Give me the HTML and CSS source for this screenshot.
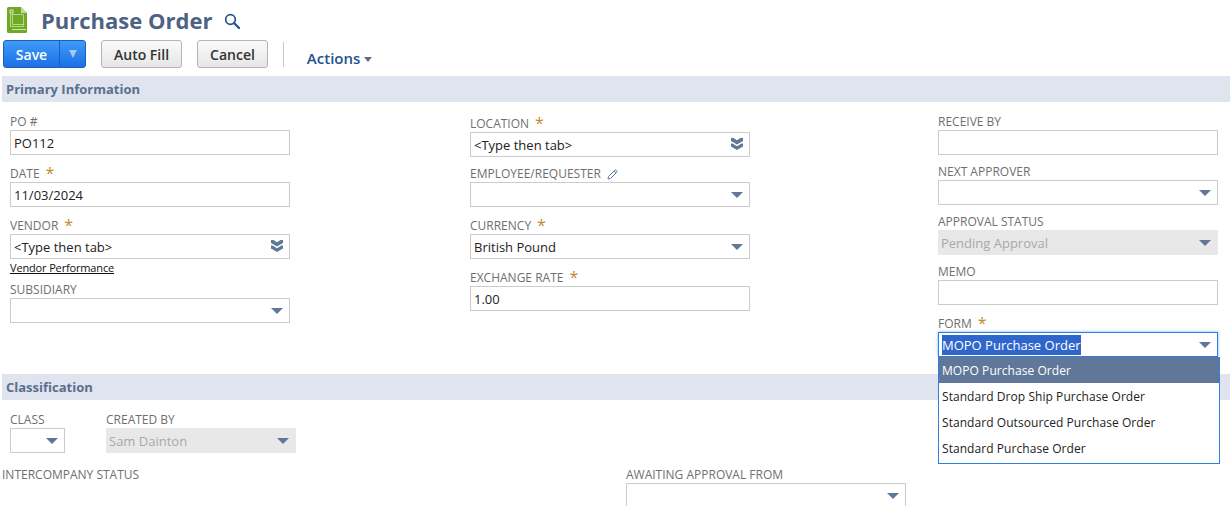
FILE: index.html
```html
<!DOCTYPE html>
<html lang="en">
<head>
<meta charset="utf-8">
<title>Purchase Order</title>
<link rel="stylesheet" href="styles.css">
</head>
<body>
<header class="title-row">
  <svg class="doc-icon" width="20" height="26" viewBox="0 0 20 26">
    <path d="M0 1.500Q0 0 1.500 0H14L20 6V24.500Q20 26 18.500 26H1.500Q0 26 0 24.500Z" fill="#6eaa24"/>
    <path d="M14 0L20 6H14Z" fill="#c3dc9c"/>
    <path d="M3 3h3v3H3z" fill="none" stroke="#dcebc4" stroke-width="1"/>
    <path d="M3.500 7.500H16.500V19.500H3.500ZM5.500 7.500V17.500H16.500" fill="none" stroke="#b7d690" stroke-width="1"/>
    <path d="M5 22.500H19" stroke="#cfe3ad" stroke-width="1"/>
  </svg>
  <h1 class="page-title">Purchase Order</h1>
  <svg class="search-icon" width="16" height="16" viewBox="0 0 16 16">
    <circle cx="6.500" cy="6.500" r="4.800" fill="none" stroke="#23568f" stroke-width="1.700"/>
    <path d="M10 10L15 15" stroke="#23568f" stroke-width="2.400" stroke-linecap="round"/>
  </svg>
</header>

<div class="toolbar">
  <div class="save-group">
    <button class="save-btn" type="button">Save</button>
    <button class="save-arrow" type="button"><span class="save-tri"></span></button>
  </div>
  <button class="btn" type="button">Auto Fill</button>
  <button class="btn" type="button">Cancel</button>
  <span class="tool-sep"></span>
  <span class="actions">Actions<span class="actions-caret"></span></span>
</div>

<section>
  <h2 class="band">Primary Information</h2>
  <div class="primary">
    <div class="col col-1">
      <div class="field">
        <label class="lbl">PO #</label>
        <div class="box">PO112</div>
      </div>
      <div class="field">
        <label class="lbl req">DATE<span class="star">*</span></label>
        <div class="box">11/03/2024</div>
      </div>
      <div class="field">
        <label class="lbl req">VENDOR<span class="star">*</span></label>
        <div class="box">&lt;Type then tab&gt;<svg class="dbl" width="12" height="12" viewBox="0 0 12 12"><path d="M0 0H2.500L6 2.200L9.500 0H12V3L6 6.500L0 3ZM0 5.500H1.500L6 8.200L10.500 5.500H12V8.500L6 12L0 8.500Z" fill="#607799"/></svg></div>
        <a class="perf-link" href="#">Vendor Performance</a>
      </div>
      <div class="field">
        <label class="lbl">SUBSIDIARY</label>
        <div class="box"><span class="tri"></span></div>
      </div>
    </div>

    <div class="col col-2">
      <div class="field">
        <label class="lbl req">LOCATION<span class="star">*</span></label>
        <div class="box">&lt;Type then tab&gt;<svg class="dbl" width="12" height="12" viewBox="0 0 12 12"><path d="M0 0H2.500L6 2.200L9.500 0H12V3L6 6.500L0 3ZM0 5.500H1.500L6 8.200L10.500 5.500H12V8.500L6 12L0 8.500Z" fill="#607799"/></svg></div>
      </div>
      <div class="field">
        <label class="lbl">EMPLOYEE/REQUESTER<svg class="pencil" width="11" height="11" viewBox="0 0 11 11"><path d="M1 10L1.500 7.500L7.800 1.200Q8.500 0.600 9.300 1.200L9.800 1.700Q10.400 2.500 9.800 3.200L3.500 9.500Z M7 2L9 4" fill="none" stroke="#5f7da6" stroke-width="1"/></svg></label>
        <div class="box"><span class="tri"></span></div>
      </div>
      <div class="field">
        <label class="lbl req">CURRENCY<span class="star">*</span></label>
        <div class="box">British Pound<span class="tri"></span></div>
      </div>
      <div class="field">
        <label class="lbl req">EXCHANGE RATE<span class="star">*</span></label>
        <div class="box">1.00</div>
      </div>
    </div>

    <div class="col col-3">
      <div class="field">
        <label class="lbl">RECEIVE BY</label>
        <div class="box"></div>
      </div>
      <div class="field">
        <label class="lbl">NEXT APPROVER</label>
        <div class="box"><span class="tri"></span></div>
      </div>
      <div class="field">
        <label class="lbl">APPROVAL STATUS</label>
        <div class="box disabled">Pending Approval<span class="tri"></span></div>
      </div>
      <div class="field">
        <label class="lbl">MEMO</label>
        <div class="box"></div>
      </div>
      <div class="field form-field">
        <label class="lbl req">FORM<span class="star">*</span></label>
        <div class="box focus"><span class="selected-text">MOPO Purchase Order</span><span class="tri"></span></div>
        <ul class="menu">
          <li class="menu-item active">MOPO Purchase Order</li>
          <li class="menu-item">Standard Drop Ship Purchase Order</li>
          <li class="menu-item">Standard Outsourced Purchase Order</li>
          <li class="menu-item">Standard Purchase Order</li>
        </ul>
      </div>
    </div>
  </div>
</section>

<section>
  <h2 class="band">Classification</h2>
  <div class="class-row">
    <div class="field class-field">
      <label class="lbl">CLASS</label>
      <div class="box"><span class="tri"></span></div>
    </div>
    <div class="field created-field">
      <label class="lbl">CREATED BY</label>
      <div class="box disabled">Sam Dainton<span class="tri"></span></div>
    </div>
  </div>
  <div class="status-row">
    <div class="field status-field">
      <label class="lbl">INTERCOMPANY STATUS</label>
    </div>
    <div class="field awaiting-field">
      <label class="lbl">AWAITING APPROVAL FROM</label>
      <div class="box"><span class="tri"></span></div>
    </div>
  </div>
</section>
</body>
</html>
```

FILE: styles.css
```css
* { box-sizing: border-box; }
html, body { margin: 0; padding: 0; }
body {
  height: 506px;
  overflow: hidden;
  background: #fff;
  font-family: "Open Sans", sans-serif;
  font-size: 13px;
  color: #222;
}
.title-row {
  display: flex;
  align-items: flex-start;
  height: 40px;
  padding: 7px 0 0 7px;
}
.doc-icon { flex: none; }
.page-title {
  margin: 0 0 0 14px;
  font-size: 22px;
  line-height: 26px;
  font-weight: 700;
  color: #4d6384;
}
.search-icon { margin: 6px 0 0 12px; flex: none; }

.toolbar {
  display: flex;
  align-items: flex-start;
  height: 36px;
  padding-left: 3px;
}
.save-group {
  display: flex;
  width: 83px;
  height: 28px;
  border: 1px solid #1a5fb4;
  border-radius: 3px;
  background: linear-gradient(#3f9bf8, #1c70e6);
  overflow: hidden;
}
.save-btn, .save-arrow, .btn {
  font-family: inherit;
  padding: 0;
  cursor: pointer;
}
.save-btn {
  width: 55px;
  border: 0;
  background: none;
  color: #fff;
  font-size: 14px;
  font-weight: 600;
}
.save-arrow {
  flex: 1;
  display: flex;
  align-items: center;
  justify-content: center;
  border: 0;
  border-left: 1px solid #1a5fb4;
  background: none;
}
.save-tri {
  border-left: 4px solid transparent;
  border-right: 4px solid transparent;
  border-top: 8px solid #a9c8ee;
}
.btn {
  height: 28px;
  margin-left: 15px;
  padding: 0 12px;
  border: 1px solid #b4b4b4;
  border-radius: 3px;
  background: linear-gradient(#fafafa, #e6e6e6);
  color: #333;
  font-size: 14px;
  font-weight: 600;
}
.tool-sep {
  width: 1px;
  height: 25px;
  margin: 2px 23px 0 15px;
  background: #c9c9c9;
}
.actions {
  display: flex;
  align-items: center;
  height: 36px;
  color: #24528f;
  font-size: 15px;
  font-weight: 600;
}
.actions-caret {
  margin: 2px 0 0 4px;
  border-left: 4px solid transparent;
  border-right: 4px solid transparent;
  border-top: 5px solid #5a6f8f;
}

.band {
  height: 26px;
  margin: 0 0 0 2px;
  padding: 0 0 0 4px;
  background: #dfe4ee;
  color: #5a6f8f;
  font-size: 13px;
  line-height: 26px;
  font-weight: 700;
}
.primary {
  display: flex;
  padding: 3px 0 17px 10px;
}
.col { width: 280px; flex: none; }
.col-2 { margin-left: 180px; }
.col-3 { margin-left: 188px; }

.field { position: relative; }
.lbl {
  display: flex;
  align-items: flex-end;
  height: 25px;
  color: #6f6f6f;
  font-size: 12px;
  line-height: 16px;
}
.lbl.req { height: 27px; }
.star {
  position: relative;
  top: -1px;
  margin-left: 6px;
  color: #c68a2e;
  font-size: 16px;
  line-height: 16px;
}
.pencil { margin: 0 0 2px 6px; }
.box {
  position: relative;
  display: flex;
  align-items: center;
  height: 25px;
  padding: 0 3px;
  border: 1px solid #ccc;
  background: #fff;
  color: #222;
  font-size: 13px;
  white-space: nowrap;
}
.box.disabled {
  padding-left: 2px;
  border-color: #e8e8e8;
  background: #e8e8e8;
  color: #a8a8a8;
}
.box.focus {
  border: 1px solid #2f7fe0;
  box-shadow: 0 0 3px #7fb4f0;
}
.selected-text {
  background: #2f66cc;
  color: #fff;
  line-height: 20px;
}
.tri {
  position: absolute;
  right: 6px;
  top: 9px;
  border-left: 6px solid transparent;
  border-right: 6px solid transparent;
  border-top: 6px solid #607799;
}
.dbl { position: absolute; right: 6px; top: 5px; }
.perf-link {
  display: block;
  height: 14px;
  color: #111;
  font-size: 11px;
  line-height: 18px;
  letter-spacing: -0.15px;
  text-decoration: underline;
}
.menu {
  position: absolute;
  left: 0;
  top: 52px;
  z-index: 2;
  width: 282px;
  margin: 0;
  padding: 0 0 2px;
  list-style: none;
  border: 1px solid #2f7fe0;
  border-top: 0;
  background: #fff;
}
.menu-item {
  height: 26px;
  padding-left: 3px;
  color: #222;
  font-size: 12px;
  line-height: 27px;
  letter-spacing: 0.06px;
  white-space: nowrap;
}
.menu-item.active { background: #607799; color: #fff; }

.class-row {
  display: flex;
  padding: 3px 0 0 10px;
}
.class-field { width: 55px; }
.created-field { width: 190px; margin-left: 41px; }
.status-row {
  display: flex;
  padding: 5px 0 0 2px;
}
.status-field { width: 624px; }
.awaiting-field { width: 280px; }
```
